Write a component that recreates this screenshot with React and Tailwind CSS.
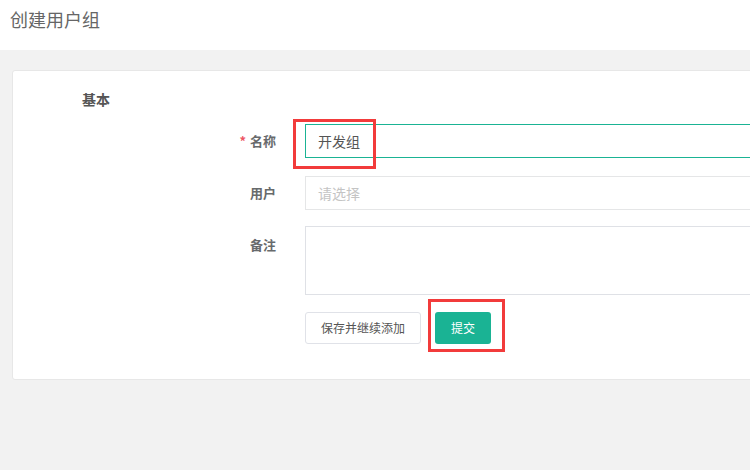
export default function App() {
  const font = { fontFamily: '"Noto Sans CJK SC", "Noto Sans", sans-serif' };
  return (
    <div className="w-[750px] h-[470px] overflow-hidden bg-[#f2f2f2] relative" style={font}>
      <div className="h-[50px] bg-white flex items-start pl-[10px] pt-[6px]">
        <h1 className="text-[18px] leading-[26px] text-[#666] font-normal">创建用户组</h1>
      </div>
      <div className="pt-[20px] pl-[12px]">
        <div className="w-[900px] h-[310px] bg-white border border-[#e7e7e7] rounded-[3px] pt-[18px]">
          <div className="pl-[69px] text-[14px] leading-[20px] font-bold text-[#555]">基本</div>
          <div className="mt-[15px] flex flex-col">
            <div className="flex items-center h-[34px]">
              <label className="w-[263px] text-right text-[13px] font-bold text-[#676a6c]">
                <span className="text-[#ed5565] mr-[4px]">*</span>名称
              </label>
              <div className="ml-[29px] flex-1 h-[34px] border border-[#1ab394] flex items-center pl-[12px] text-[14px] text-[#555]">
                开发组
              </div>
            </div>
            <div className="flex items-center h-[34px] mt-[18px]">
              <label className="w-[263px] text-right text-[13px] font-bold text-[#676a6c]">用户</label>
              <div className="ml-[29px] flex-1 h-[34px] border border-[#e5e6e7] flex items-center pl-[12px] text-[14px] text-[#c4c4c4]">
                请选择
              </div>
            </div>
            <div className="flex items-start mt-[16px]">
              <label className="w-[263px] text-right text-[13px] font-bold text-[#676a6c] pt-[9px]">备注</label>
              <div className="ml-[29px] flex-1 h-[69px] border border-[#dfe1e6]"></div>
            </div>
            <div className="flex items-center mt-[17px] pl-[292px] gap-[14px]">
              <button className="h-[32px] w-[116px] border border-[#e0e2e8] rounded-[3px] bg-white text-[12px] text-[#555]">
                保存并继续添加
              </button>
              <button className="h-[32px] w-[56px] rounded-[3px] bg-[#1ab394] text-[12px] text-white">
                提交
              </button>
            </div>
          </div>
        </div>
      </div>
      <div className="absolute left-[293px] top-[119px] w-[83px] h-[50px] border-[3px] border-[#f23b3b]"></div>
      <div className="absolute left-[428px] top-[299px] w-[77px] h-[53px] border-[3px] border-[#f23b3b]"></div>
    </div>
  );
}
